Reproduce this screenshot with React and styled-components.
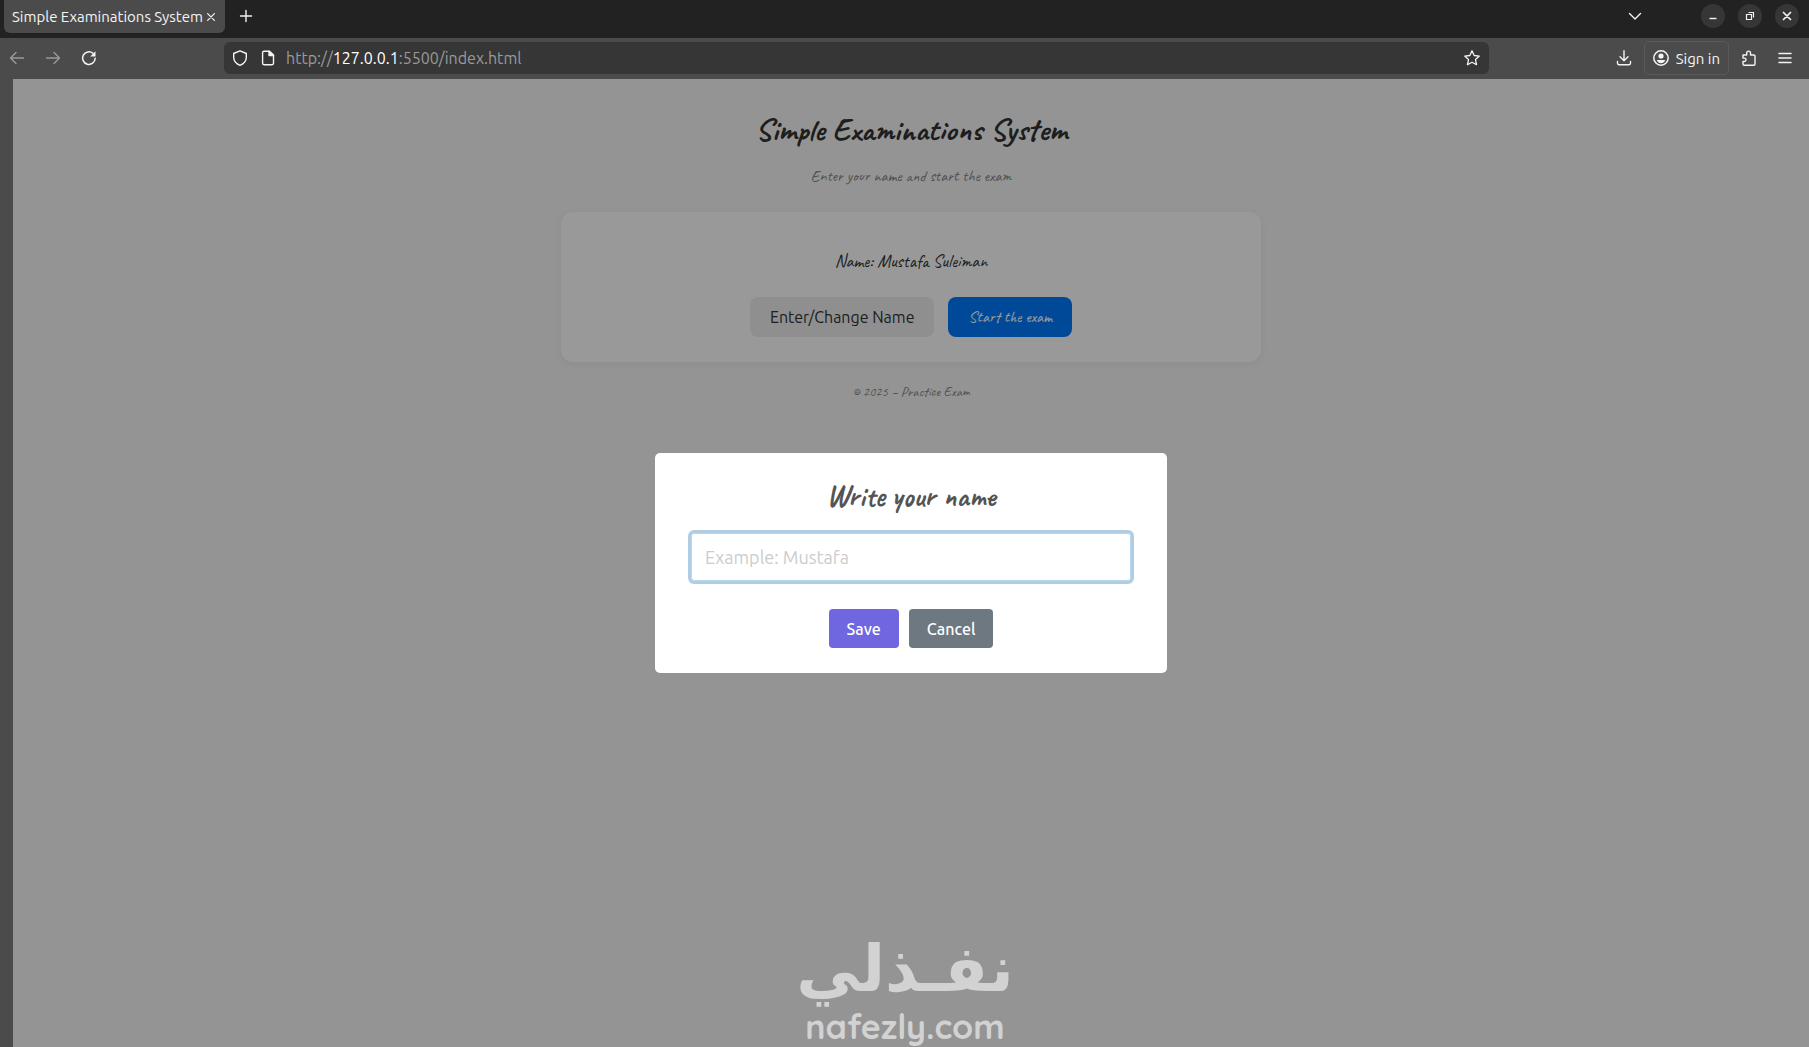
import React, { useState } from 'react'
import styled, { createGlobalStyle, ThemeProvider } from 'styled-components'

const theme = {
    fonts: {
        ui: 'Ubuntu, "Open Sans", "Noto Sans", sans-serif',
        hand: 'Caveat, Lato, cursive',
        mark: 'Quicksand, Ubuntu, "DejaVu Sans", sans-serif',
    },
    colors: {
        strip: '#222222',
        bar: '#4b4b4b',
        field: '#363636',
        light: '#f4f4f4',
        muted: '#9a9a9a',
        page: '#f7f7f7',
        text: '#333333',
        note: '#888888',
        primary: '#007bff',
        save: '#7066e0',
        cancel: '#6e7881',
    },
}

const GlobalStyle = createGlobalStyle`
    * {
        box-sizing: border-box;
        margin: 0;
        padding: 0;
    }
    body {
        font-family: ${theme.fonts.ui};
        background: ${theme.colors.bar};
    }
    button, input {
        font-family: inherit;
        border: none;
    }
`

const StyledWindow = styled.div`
    min-height: 100vh;
    display: flex;
    flex-direction: column;
`

const StyledTabStrip = styled.header`
    height: 38px;
    background: ${props => props.theme.colors.strip};
    display: flex;
    align-items: flex-start;
    padding: 0 10px 0 4px;
`

const StyledTab = styled.div`
    height: 33px;
    background: ${props => props.theme.colors.bar};
    color: ${props => props.theme.colors.light};
    border-radius: 0 0 6px 6px;
    display: flex;
    align-items: center;
    padding: 0 6px 0 8px;
    font-size: 15px;
    white-space: nowrap;
`

const StyledIconButton = styled.button`
    width: ${props => props.$size || 32}px;
    height: ${props => props.$size || 32}px;
    flex: none;
    display: flex;
    align-items: center;
    justify-content: center;
    background: ${props => props.$round ? '#363636' : 'transparent'};
    border-radius: ${props => props.$round ? '50%' : '4px'};
    color: ${props => props.$dim ? props.theme.colors.muted : props.theme.colors.light};
`

const StyledNewTab = styled.div`
    margin-left: 5px;
`

const StyledWindowButtons = styled.div`
    margin-left: auto;
    display: flex;
    align-items: center;
    gap: 13px;
    height: 32px;
    button:first-child {
        margin-right: 39px;
    }
`

const StyledToolbar = styled.nav`
    height: 41px;
    background: ${props => props.theme.colors.bar};
    display: flex;
    align-items: center;
    padding: 0 8px 1px 1px;
`

const StyledNavButtons = styled.div`
    display: flex;
    gap: 4px;
    width: 223px;
    flex: none;
`

const StyledAddress = styled.div`
    flex: 1;
    height: 32px;
    background: ${props => props.theme.colors.field};
    border-radius: 6px;
    display: flex;
    align-items: center;
    color: ${props => props.theme.colors.light};
    padding: 0 1px 0 2px;
`

const StyledUrl = styled.p`
    flex: 1;
    margin-left: 4px;
    font-size: 16px;
    color: ${props => props.theme.colors.muted};
    span {
        color: white;
    }
`

const StyledTools = styled.div`
    margin-left: 119px;
    display: flex;
    align-items: center;
    gap: 4px;
`

const StyledSignIn = styled.button`
    height: 34px;
    display: flex;
    align-items: center;
    gap: 7px;
    padding: 0 8px;
    background: transparent;
    border: 1px solid #5a5a5a;
    border-radius: 5px;
    color: ${props => props.theme.colors.light};
    font-size: 15px;
    white-space: nowrap;
`

const StyledViewport = styled.div`
    flex: 1;
    margin-left: 13px;
    position: relative;
    background: ${props => props.theme.colors.page};
    font-family: ${props => props.theme.fonts.hand};
`

const StyledPage = styled.main`
    max-width: 732px;
    margin: 0 auto;
    padding: 31px 16px;
    text-align: center;
`

const StyledTitle = styled.h1`
    font-size: 32px;
    line-height: 40px;
    color: ${props => props.theme.colors.text};
`

const StyledSubtitle = styled.p`
    margin: 16px 0 26px;
    font-size: 16px;
    line-height: 20px;
    color: ${props => props.theme.colors.note};
`

const StyledCard = styled.section`
    height: 150px;
    padding: 37px 24px 24px;
    background: white;
    border-radius: 12px;
    box-shadow: 0 2px 8px rgba(0, 0, 0, 0.06);
`

const StyledName = styled.p`
    font-size: 18px;
    line-height: 24px;
    color: ${props => props.theme.colors.text};
`

const StyledActions = styled.div`
    display: flex;
    justify-content: center;
    gap: ${props => props.$gap}px;
    margin-top: 24px;
`

const StyledPageButton = styled.button`
    height: 40px;
    padding: 0 20px;
    border-radius: 8px;
    font-size: 16px;
    color: white;
    background: ${props => props.theme.colors.primary};
`

const StyledNameButton = styled(StyledPageButton)`
    font-family: ${props => props.theme.fonts.ui};
    color: ${props => props.theme.colors.text};
    background: #efefef;
`

const StyledFooter = styled.footer`
    margin-top: 20px;
    font-size: 14px;
    line-height: 20px;
    color: ${props => props.theme.colors.note};
`

const StyledBackdrop = styled.div`
    position: absolute;
    inset: 0;
    display: grid;
    place-items: center;
    background: rgba(0, 0, 0, 0.4);
`

const StyledDialog = styled.form`
    width: 512px;
    max-width: 100%;
    padding: 23px 34px 25px;
    background: white;
    border-radius: 5px;
    text-align: center;
    label {
        display: block;
        font-size: 30px;
        font-weight: 600;
        line-height: 40px;
        color: #545454;
    }
`

const StyledField = styled.div`
    padding: 17px 2px 4px;
`

const StyledInput = styled.input`
    width: 100%;
    height: 48px;
    padding: 0 13px;
    border: 1px solid #b4dbed;
    border-radius: 3px;
    box-shadow: 0 0 0 3px #b1cde3;
    outline: none;
    font-family: ${props => props.theme.fonts.ui};
    font-size: 18px;
    color: #545454;
    &::placeholder {
        color: #cccccc;
        opacity: 1;
    }
`

const StyledDialogButton = styled.button`
    height: 39px;
    padding: 0 18px;
    border-radius: 4px;
    background: ${props => props.$cancel ? props.theme.colors.cancel : props.theme.colors.save};
    color: white;
    font-family: ${props => props.theme.fonts.ui};
    font-size: 16px;
    font-weight: 500;
`

const StyledWatermark = styled.div`
    position: absolute;
    left: 0;
    right: 12px;
    bottom: 0;
    text-align: center;
    font-family: ${props => props.theme.fonts.mark};
    font-weight: 700;
    color: #d2d2d2;
    pointer-events: none;
    p:first-child {
        font-size: 64px;
        line-height: 80px;
    }
    p:last-child {
        font-size: 34px;
        line-height: 40px;
    }
`

const Icon = ({ size = 16, width = 1.4, children }) => (
    <svg width={size} height={size} viewBox="0 0 16 16" fill="none" stroke="currentColor"
        strokeWidth={width} strokeLinecap="round" strokeLinejoin="round" aria-hidden="true">
        {children}
    </svg>
)

const TabStrip = () => (
    <StyledTabStrip>
        <StyledTab>
            Simple Examinations System
            <StyledIconButton $size={16} aria-label="Close tab">
                <Icon size={12} width={1.7}><path d="M3.5 3.5l9 9M12.5 3.5l-9 9" /></Icon>
            </StyledIconButton>
        </StyledTab>
        <StyledNewTab>
            <StyledIconButton aria-label="New tab">
                <Icon><path d="M8 2.5v11M2.5 8h11" /></Icon>
            </StyledIconButton>
        </StyledNewTab>
        <StyledWindowButtons>
            <StyledIconButton $size={28} aria-label="List all tabs">
                <Icon><path d="M2.5 5.5L8 11l5.5-5.5" /></Icon>
            </StyledIconButton>
            <StyledIconButton $round $size={24} aria-label="Minimize">
                <Icon><path d="M4.5 10.5h7" strokeLinecap="butt" /></Icon>
            </StyledIconButton>
            <StyledIconButton $round $size={24} aria-label="Restore">
                <Icon width={1.2}><path d="M4.5 6.5h5v5h-5zM7 4.5h4.5V9" strokeLinejoin="miter" /></Icon>
            </StyledIconButton>
            <StyledIconButton $round $size={24} aria-label="Close window">
                <Icon width={1.7}><path d="M4.5 4.5l7 7M11.5 4.5l-7 7" /></Icon>
            </StyledIconButton>
        </StyledWindowButtons>
    </StyledTabStrip>
)

const Toolbar = () => (
    <StyledToolbar>
        <StyledNavButtons>
            <StyledIconButton $dim aria-label="Back">
                <Icon><path d="M14.5 8H1.5M7 2.5L1.5 8 7 13.5" /></Icon>
            </StyledIconButton>
            <StyledIconButton $dim aria-label="Forward">
                <Icon><path d="M1.5 8h13M9 2.5L14.5 8 9 13.5" /></Icon>
            </StyledIconButton>
            <StyledIconButton aria-label="Reload">
                <Icon width={1.5}>
                    <path d="M14.2 8.3A6.3 6.3 0 1 1 12 3.3" />
                    <path d="M14.5 1.2v5.3H9.2z" fill="currentColor" stroke="none" />
                </Icon>
            </StyledIconButton>
        </StyledNavButtons>
        <StyledAddress>
            <StyledIconButton $size={28} aria-label="Tracking protection">
                <Icon><path d="M8 .8l6.3 2.7v3.7c0 3.5-2.5 6.5-6.3 8.1-3.8-1.6-6.3-4.6-6.3-8.1V3.5z" /></Icon>
            </StyledIconButton>
            <StyledIconButton $size={28} aria-label="Site information">
                <Icon>
                    <path d="M4 1.2h5.5L13.5 5v8.3a1.4 1.4 0 0 1-1.4 1.4H4a1.4 1.4 0 0 1-1.4-1.4V2.6A1.4 1.4 0 0 1 4 1.2z" />
                    <path d="M9 1.2V5.5h4.5z" fill="currentColor" />
                </Icon>
            </StyledIconButton>
            <StyledUrl>http://<span>127.0.0.1</span>:5500/index.html</StyledUrl>
            <StyledIconButton aria-label="Bookmark this page">
                <Icon width={1.3}><path d="M8 .8l2.2 4.7 5.1.6-3.8 3.5 1 5.1L8 12.2l-4.5 2.5 1-5.1L.7 6.1l5.1-.6z" /></Icon>
            </StyledIconButton>
        </StyledAddress>
        <StyledTools>
            <StyledIconButton aria-label="Downloads">
                <Icon><path d="M8 .8v9.7M4 6.8l4 4 4-4M1.5 11.5v1.7a1.5 1.5 0 0 0 1.5 1.5h10a1.5 1.5 0 0 0 1.5-1.5v-1.7" /></Icon>
            </StyledIconButton>
            <StyledSignIn>
                <Icon width={1.5}>
                    <circle cx="8" cy="8" r="7.2" />
                    <circle cx="8" cy="6" r="2.6" fill="currentColor" stroke="none" />
                    <path d="M3.8 10h8.4c-.4 2-2 3.2-4.2 3.2S4.2 12 3.8 10z" fill="currentColor" stroke="none" />
                </Icon>
                Sign in
            </StyledSignIn>
            <StyledIconButton aria-label="Extensions">
                <Icon>
                    <path d="M2 5h3.7V3a1.9 1.9 0 0 1 3.8 0v2h3.3a1.2 1.2 0 0 1 1.2 1.2V14a1.2 1.2 0 0 1-1.2 1.2H3.2A1.2 1.2 0 0 1 2 14v-2.5h1.3a1.7 1.7 0 0 0 0-3.4H2z" />
                </Icon>
            </StyledIconButton>
            <StyledIconButton aria-label="Open menu">
                <Icon width={1.5}><path d="M2 3.5h12M2 8h12M2 12.5h12" /></Icon>
            </StyledIconButton>
        </StyledTools>
    </StyledToolbar>
)

const NameDialog = () => {
    const [name, setName] = useState('')

    return (
        <StyledBackdrop>
            <StyledDialog role="dialog" onSubmit={e => e.preventDefault()}>
                <label htmlFor="name">Write your name</label>
                <StyledField>
                    <StyledInput
                        id="name"
                        type="text"
                        placeholder="Example: Mustafa"
                        value={name}
                        onChange={e => setName(e.target.value)}
                    />
                </StyledField>
                <StyledActions $gap={10}>
                    <StyledDialogButton type="submit">Save</StyledDialogButton>
                    <StyledDialogButton type="button" $cancel>Cancel</StyledDialogButton>
                </StyledActions>
            </StyledDialog>
        </StyledBackdrop>
    )
}

const App = () => (
    <ThemeProvider theme={theme}>
        <GlobalStyle />
        <StyledWindow>
            <TabStrip />
            <Toolbar />
            <StyledViewport>
                <StyledPage>
                    <StyledTitle>Simple Examinations System</StyledTitle>
                    <StyledSubtitle>Enter your name and start the exam</StyledSubtitle>
                    <StyledCard>
                        <StyledName>Name: Mustafa Suleiman</StyledName>
                        <StyledActions $gap={14}>
                            <StyledNameButton>Enter/Change Name</StyledNameButton>
                            <StyledPageButton>Start the exam</StyledPageButton>
                        </StyledActions>
                    </StyledCard>
                    <StyledFooter>© 2025 – Practice Exam</StyledFooter>
                </StyledPage>
                <NameDialog />
                <StyledWatermark>
                    <p lang="ar" dir="rtl">نفـذلي</p>
                    <p>nafezly.com</p>
                </StyledWatermark>
            </StyledViewport>
        </StyledWindow>
    </ThemeProvider>
)

export default App
